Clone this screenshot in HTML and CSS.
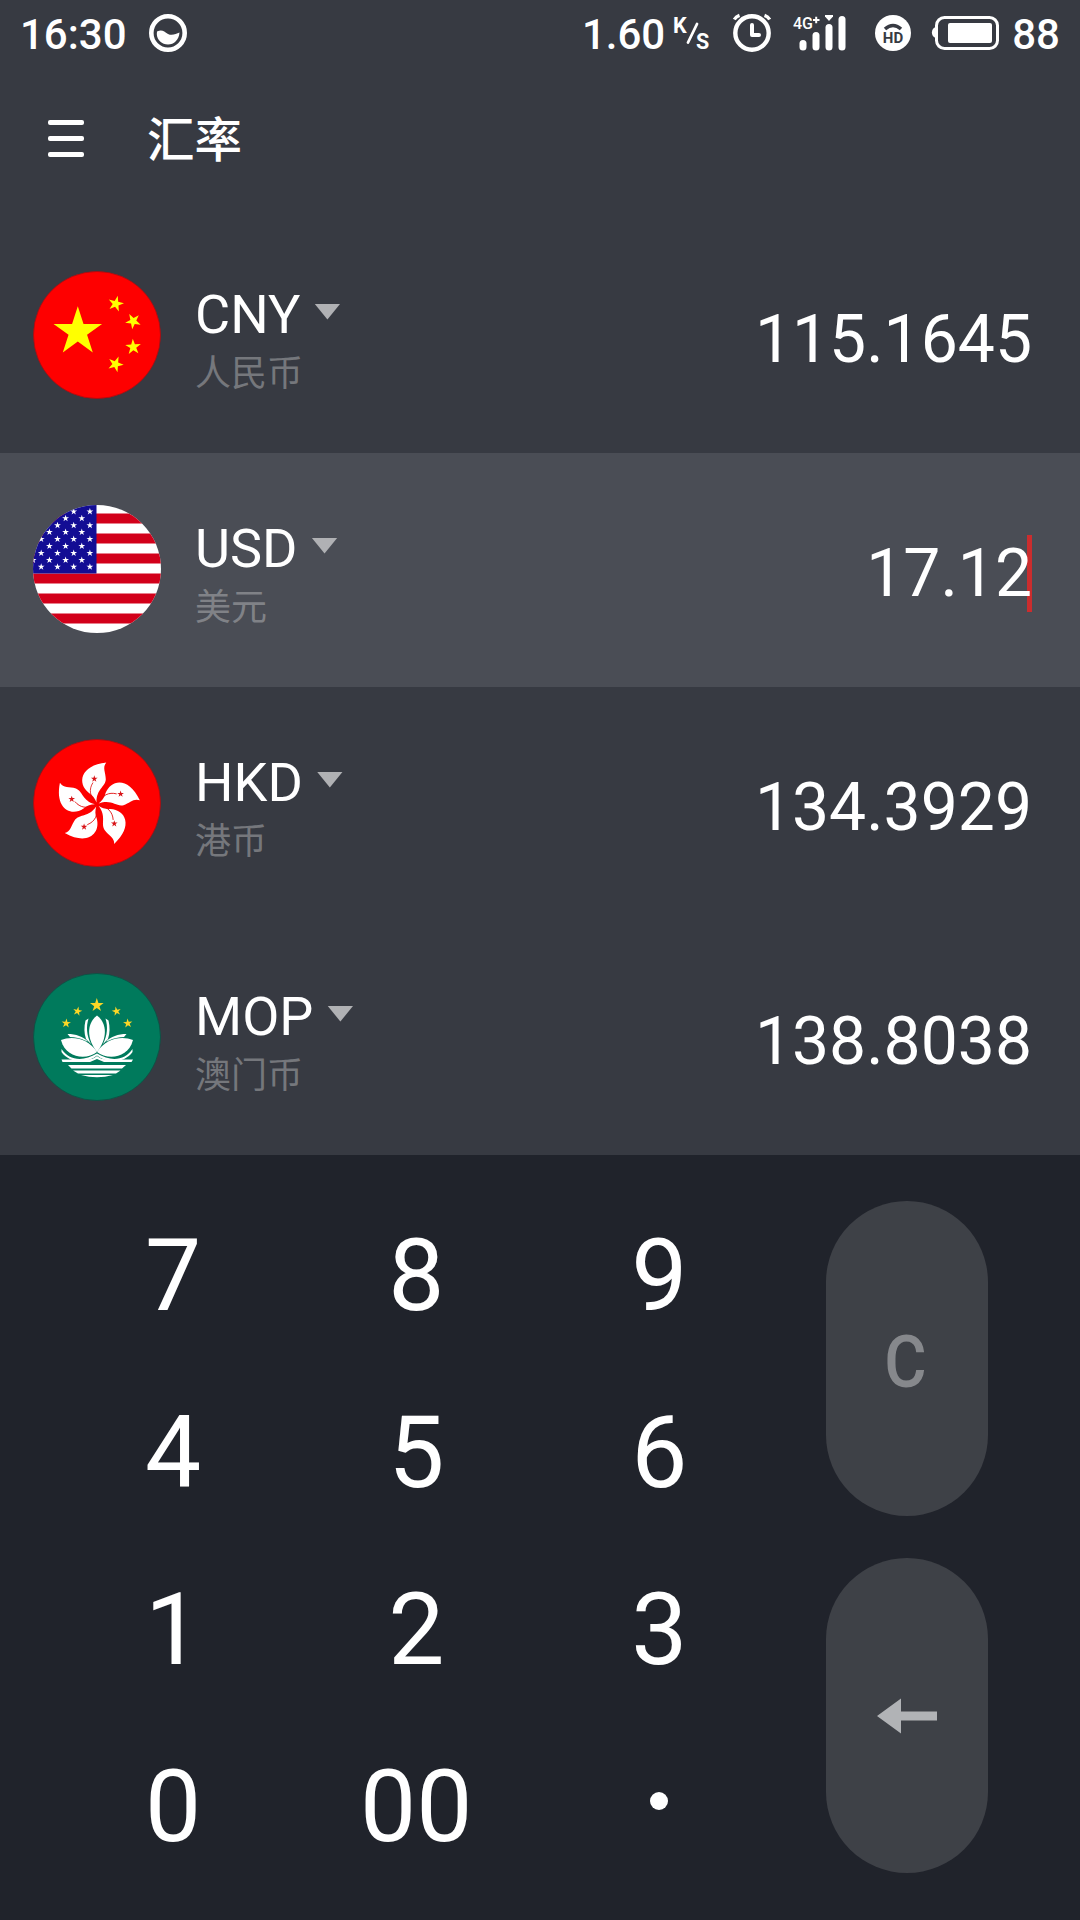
FILE: index.html
```html
<!DOCTYPE html>
<html lang="zh-CN">
<head>
<meta charset="utf-8">
<title>汇率</title>
<link rel="stylesheet" href="styles.css">
</head>
<body>
<svg class="defs" width="0" height="0" aria-hidden="true">
  <defs>
    <polygon id="star" points="0,-1 .2245,-.309 .951,-.309 .363,.118 .588,.809 0,.382 -.588,.809 -.363,.118 -.951,-.309 -.2245,-.309"/>
    <clipPath id="disc"><circle cx="64" cy="64" r="64"/></clipPath>
    <g id="star-row">
      <use href="#star" transform="translate(8.2 0) scale(3.6)"/>
      <use href="#star" transform="translate(24.5 0) scale(3.6)"/>
      <use href="#star" transform="translate(40.7 0) scale(3.6)"/>
      <use href="#star" transform="translate(56.9 0) scale(3.6)"/>
    </g>
    <g id="petal">
      <path fill="#fff" d="M-.5-2C-2-6-4-9-8-11.500C-20-21-17-39 9.300-42C5-37 8.800-32 8.800-25C8-17-.5-16-.5-2Z"/>
      <path fill="none" stroke="#e00a0a" stroke-width=".8" d="M-4-22C-8.500-15-7-8-1.500-2"/>
      <use href="#star" fill="#d81418" transform="translate(-2.700 -25.700) scale(3.500)"/>
    </g>
  </defs>
</svg>

<header class="status">
  <span class="clock">16:30</span>
  <svg class="ball" width="38" height="38" viewBox="0 0 38 38"><circle cx="19" cy="19" r="16.700" fill="none" stroke="#fff" stroke-width="4.600"/><path fill="#fff" d="M8 17.500C13 15 15 17.500 19 20C23 22 27 20 30.500 18.500C30 26 25 30.500 19 30.500C13 30.500 8 26 7.800 20Z"/></svg>
  <span class="speed">1.60</span>
  <svg class="unit" width="40" height="40" viewBox="0 0 40 40"><text x="0" y="18.500" class="unit-text">K</text><path d="M15 28.500L24 10" stroke="#fff" stroke-width="2.800" stroke-linecap="round"/><text x="23" y="34.500" class="unit-text">S</text></svg>
  <svg class="alarm" width="40" height="40" viewBox="0 0 40 40"><g fill="none" stroke="#fff"><circle cx="20" cy="20" r="16.700" stroke-width="4.400"/><path d="M20 12V22H27" stroke-width="4" stroke-linecap="round" stroke-linejoin="round"/><path d="M2.300 6.500Q4 3.500 7.500 2.300M37.700 6.500Q36 3.500 32.500 2.300" stroke-width="3.400"/></g></svg>
  <svg class="signal" width="54" height="38" viewBox="0 0 54 38"><text x="0" y="14.500" class="net-text">4G</text><path d="M20 6H26.500M23.200 2.700V9.300" stroke="#fff" stroke-width="2"/><g fill="#fff"><rect x="6.500" y="26" width="7" height="10.500" rx="3.500"/><rect x="19.500" y="18" width="7" height="18.500" rx="3.500"/><rect x="32.500" y="10" width="7" height="26.500" rx="3.500"/><rect x="45.500" y="2" width="7" height="34.500" rx="3.500"/><path d="M32 1H40V2.500L36 7L32 2.500Z"/></g></svg>
  <svg class="hd" width="36" height="36" viewBox="0 0 36 36"><circle cx="18" cy="18" r="18" fill="#fff"/><path d="M10 14Q18 7 26 14" fill="none" stroke="#373a42" stroke-width="3.600"/><text x="18" y="28" text-anchor="middle" class="hd-text">HD</text></svg>
  <svg class="battery" width="68" height="36" viewBox="0 0 68 36"><path d="M5 12C-.5 13-.5 22 5 23Z" fill="#fff"/><rect x="5.500" y="2.500" width="61" height="31" rx="8" fill="none" stroke="#fff" stroke-width="3"/><rect x="17" y="8" width="44" height="20" rx="2" fill="#fff"/></svg>
  <span class="level">88</span>
</header>

<nav class="bar">
  <svg width="36" height="37" viewBox="0 0 36 37" fill="#fff"><rect width="36" height="5" rx="2"/><rect y="16" width="36" height="5" rx="2"/><rect y="32" width="36" height="5" rx="2"/></svg>
  <h1 class="title">汇率</h1>
</nav>

<main>
  <section class="row">
    <svg class="flag" viewBox="0 0 128 128"><circle cx="64" cy="64" r="63.500" fill="#fe0000" stroke="#a80d12" stroke-width=".8"/><g fill="#ff0"><use href="#star" transform="translate(44.800 60.800) scale(25.500)"/><use href="#star" transform="translate(82.800 32.800) rotate(14) scale(8.200)"/><use href="#star" transform="translate(100.200 50.200) rotate(43) scale(8.200)"/><use href="#star" transform="translate(100.200 76) rotate(-3) scale(8.200)"/><use href="#star" transform="translate(82.500 93.200) rotate(22) scale(8.200)"/></g></svg>
    <div class="info"><div class="code">CNY<i class="caret"></i></div><div class="name">人民币</div></div>
    <div class="value">115.1645</div>
  </section>
  <section class="row active">
    <svg class="flag" viewBox="0 0 128 128"><g clip-path="url(#disc)"><rect width="128" height="128" fill="#fff"/><path fill="#d2001a" d="M0 8.500H128V18.500H0ZM0 28.500H128V38.500H0ZM0 48.500H128V58.500H0ZM0 68.500H128V78.500H0ZM0 88.500H128V98.500H0ZM0 108.500H128V118.500H0Z"/><rect width="63.500" height="68.500" fill="#130d94"/><g fill="#fff"><use href="#star-row" y="6.500"/><use href="#star-row" x="-8.100" y="13.400"/><use href="#star-row" y="20.300"/><use href="#star-row" x="-8.100" y="27.200"/><use href="#star-row" y="34.200"/><use href="#star-row" x="-8.100" y="41.100"/><use href="#star-row" y="48"/><use href="#star-row" x="-8.100" y="55"/><use href="#star-row" y="61.900"/></g></g></svg>
    <div class="info"><div class="code">USD<i class="caret"></i></div><div class="name">美元</div></div>
    <div class="value"><span class="cursor"></span>17.12</div>
  </section>
  <section class="row">
    <svg class="flag" viewBox="0 0 128 128"><circle cx="64" cy="64" r="63.500" fill="#fe0000" stroke="#a80d12" stroke-width=".8"/><g transform="translate(64 65.500)"><use href="#petal"/><use href="#petal" transform="rotate(72)"/><use href="#petal" transform="rotate(144)"/><use href="#petal" transform="rotate(216)"/><use href="#petal" transform="rotate(288)"/></g></svg>
    <div class="info"><div class="code">HKD<i class="caret"></i></div><div class="name">港币</div></div>
    <div class="value">134.3929</div>
  </section>
  <section class="row">
    <svg class="flag" viewBox="0 0 128 128"><circle cx="64" cy="64" r="63.500" fill="#007a5c" stroke="#0d4f43" stroke-width=".8"/><g fill="#fcd726"><use href="#star" transform="translate(63.800 32.300) scale(7.200)"/><use href="#star" transform="translate(44.500 38.300) rotate(12) scale(4.800)"/><use href="#star" transform="translate(83.500 38.300) rotate(-12) scale(4.800)"/><use href="#star" transform="translate(33.200 50.300) rotate(5) scale(4.900)"/><use href="#star" transform="translate(94.800 50.300) rotate(-5) scale(4.900)"/></g>
      <g fill="#fff"><path d="M64 42.500C54 50 53 65 64 79C75 65 74 50 64 42.500Z"/>
      <g id="leaf"><path d="M28 67C39 62.500 55 65 64 79C54 87 33 86 28 67Z"/><path d="M55.500 45.500L52.500 47.500C51 54 51 60 53 66L58 71C53.500 62 53 54 55.500 45.500Z"/><path d="M34.500 61C43 61 50 63.500 55 68.500L52 67.500C48 65 42 64.200 37 64Z"/><path d="M28.500 76C36 87.500 50 89 64 80.500V82.500C54 91 36 90 28.500 79Z"/></g>
      <use href="#leaf" transform="translate(128 0) scale(-1 1)"/>
      <path d="M28.500 86.500H54Q60 86.500 64 83Q68 86.500 74 86.500H100L98.500 89H71L64 86L57 89H29.500ZM35 92H93L89 95.500H38.500ZM40 97.500H87.500L83 100.500H45ZM48 102H80Q64 106.500 48 102Z"/></g></svg>
    <div class="info"><div class="code">MOP<i class="caret"></i></div><div class="name">澳门币</div></div>
    <div class="value">138.8038</div>
  </section>
</main>

<footer class="pad">
  <div class="keys">
    <span>7</span><span>8</span><span>9</span>
    <span>4</span><span>5</span><span>6</span>
    <span>1</span><span>2</span><span>3</span>
    <span>0</span><span>00</span><span class="point"><i class="dot"></i></span>
  </div>
  <div class="side">
    <div class="pill"><span class="clear">C</span></div>
    <div class="pill"><svg width="60" height="36" viewBox="0 0 60 36"><path fill="#b1b3b6" d="M0 18L24 .5V13.500H60V22.500H24V35.500Z"/></svg></div>
  </div>
</footer>
</body>
</html>
```
FILE: styles.css
```css
* { box-sizing: border-box; }
body {
  margin: 0;
  width: 1080px;
  height: 1920px;
  overflow: hidden;
  display: flex;
  flex-direction: column;
  background: #373a42;
  color: #fff;
  font-family: Roboto, "Noto Sans CJK SC", sans-serif;
}
svg { display: block; flex: none; }
.defs { position: absolute; }

.status {
  height: 68px;
  padding: 0 20px 0 20px;
  display: flex;
  align-items: center;
  font-size: 42px;
  font-weight: 500;
  line-height: 69px;
}
.ball { margin-left: 22px; margin-top: -2px; }
.speed { margin-left: auto; }
.unit { margin-left: 8px; }
.unit-text { font: 700 21.500px Roboto, sans-serif; fill: #fff; }
.alarm { margin-left: 19px; margin-top: -2px; }
.signal { margin-left: 21px; margin-top: -2px; }
.net-text { font: 500 16px Roboto, sans-serif; fill: #fff; }
.hd { margin-left: 28px; margin-top: -2px; }
.hd-text { font: 700 15px Roboto, sans-serif; fill: #373a42; }
.battery { margin-left: 20px; margin-top: -2px; }
.level { margin-left: 13px; }

.bar {
  height: 151px;
  padding: 52px 48px 0;
  display: flex;
  align-items: flex-start;
  gap: 63px;
}
.title {
  margin: -3px 0 0;
  font-size: 47.500px;
  line-height: 48px;
  font-weight: 500;
}

.row {
  height: 234px;
  padding: 0 48px 0 33px;
  display: flex;
  align-items: center;
}
.active { background: #4a4d55; }
.flag { width: 128px; height: 128px; margin-top: -2px; }
.info { margin-left: 34px; padding-top: 13px; flex: 1; }
.code {
  display: flex;
  align-items: center;
  gap: 14px;
  font-size: 54px;
  line-height: 64px;
}
.caret {
  width: 26px;
  height: 16px;
  margin-top: -7px;
  background: #b0b1b4;
  clip-path: polygon(0 0, 100% 0, 50% 100%);
}
.name {
  font-size: 36px;
  line-height: 55px;
  color: #75777c;
}
.active .name { color: #808287; }
.value {
  position: relative;
  padding-top: 7px;
  font-size: 66px;
  line-height: 77px;
}
.cursor {
  position: absolute;
  right: 0;
  top: 7px;
  width: 5px;
  height: 77px;
  background: #cb2d2e;
  z-index: -1;
}
.active .value { z-index: 0; }

.pad {
  flex: 1;
  background: #20232b;
  padding: 32px 0 0 51.500px;
  display: flex;
}
.keys {
  display: grid;
  grid-template-columns: repeat(3, 243.200px);
  grid-auto-rows: 177px;
  text-align: center;
  font-size: 100px;
  line-height: 177px;
}
.point {
  display: flex;
  align-items: center;
  justify-content: center;
  padding-bottom: 11px;
}
.dot {
  width: 18px;
  height: 18px;
  border-radius: 50%;
  background: #fff;
}
.side {
  width: 251.800px;
  padding-top: 14px;
  display: flex;
  flex-direction: column;
  align-items: center;
  gap: 42px;
}
.pill {
  width: 162px;
  height: 315px;
  border-radius: 81px;
  background: #3e4147;
  color: #86888c;
  display: flex;
  align-items: center;
  justify-content: center;
  font-size: 72px;
  font-weight: 500;
}
.clear {
  padding-top: 7px;
  transform: translateX(-1px) scaleX(.9);
}
```
